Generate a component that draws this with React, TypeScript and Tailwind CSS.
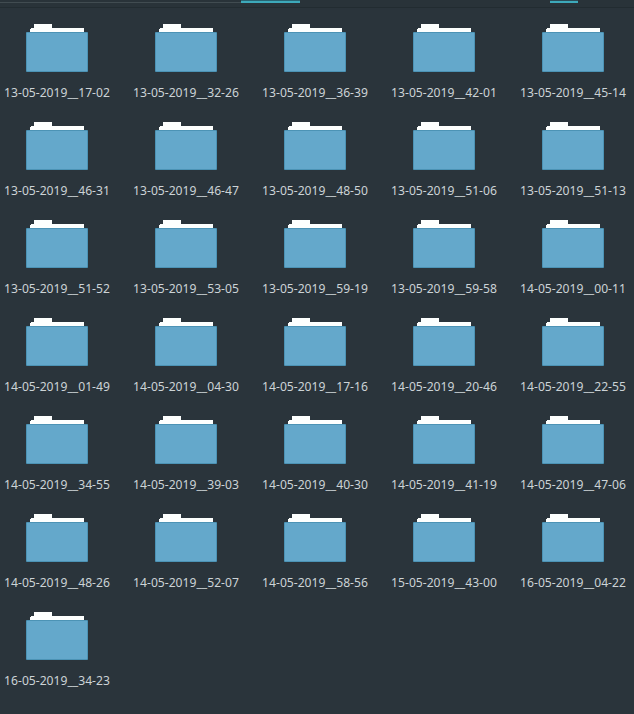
const folders = [
    '13-05-2019__17-02', '13-05-2019__32-26', '13-05-2019__36-39', '13-05-2019__42-01', '13-05-2019__45-14',
    '13-05-2019__46-31', '13-05-2019__46-47', '13-05-2019__48-50', '13-05-2019__51-06', '13-05-2019__51-13',
    '13-05-2019__51-52', '13-05-2019__53-05', '13-05-2019__59-19', '13-05-2019__59-58', '14-05-2019__00-11',
    '14-05-2019__01-49', '14-05-2019__04-30', '14-05-2019__17-16', '14-05-2019__20-46', '14-05-2019__22-55',
    '14-05-2019__34-55', '14-05-2019__39-03', '14-05-2019__40-30', '14-05-2019__41-19', '14-05-2019__47-06',
    '14-05-2019__48-26', '14-05-2019__52-07', '14-05-2019__58-56', '15-05-2019__43-00', '16-05-2019__04-22',
    '16-05-2019__34-23',
];

function FolderIcon() {
    return (
        <svg width="62" height="48" viewBox="0 0 62 48" className="block">
            <path d="M8 0H26V4H58V8H4V5H5V4H8Z" fill="#fdfffe" />
            <rect y="8" width="62" height="40" rx="1" fill="#4c93b5" />
            <rect x="1" y="9" width="60" height="38" fill="#64a8cb" />
        </svg>
    );
}

function Folder({ name }: { name: string }) {
    return (
        <div className="flex h-[98px] flex-col items-center">
            <FolderIcon />
            <span className="mt-3 whitespace-nowrap text-[12.15px] leading-[17px] text-[#ccd3d6]">{name}</span>
        </div>
    );
}

export default function App() {
    return (
        <div className="h-[714px] w-[634px] overflow-hidden bg-[#2a343b] font-['Noto_Sans',sans-serif]">
            {/* bottom edge of the tab bar */}
            <div className="flex h-2 items-start border-b border-[#222c31] bg-[#293339]">
                <div className="mt-0.5 h-px w-[241px] bg-[#414c51]" />
                <div className="h-[3px] w-[59px] border-t border-[#286472] bg-[#3da9ba]" />
                <div className="ml-[250px] h-[3px] w-7 border-t border-[#2a4c57] bg-[#3da9ba]" />
            </div>

            <div className="-ml-[7.5px] grid w-[645px] grid-cols-[repeat(5,129px)] pt-4">
                {folders.map((name) => (
                    <Folder key={name} name={name} />
                ))}
            </div>
        </div>
    );
}
